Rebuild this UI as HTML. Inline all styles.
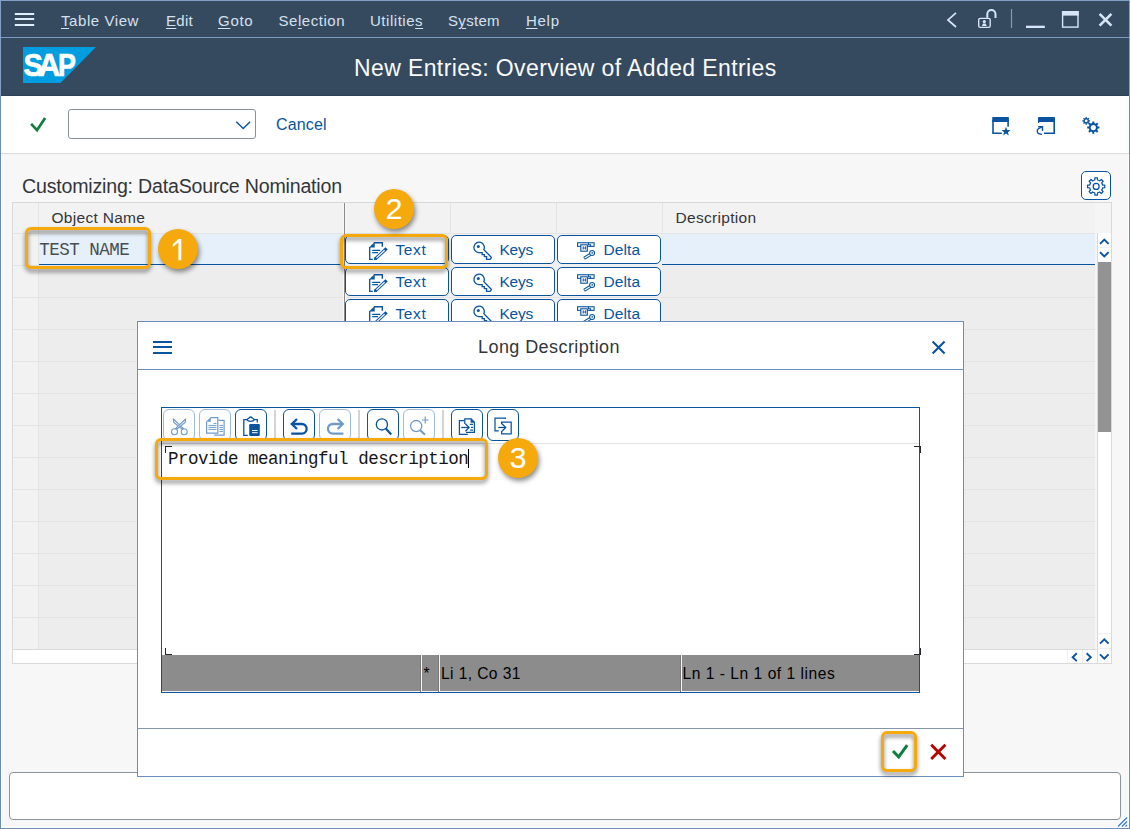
<!DOCTYPE html>
<html>
<head>
<meta charset="utf-8">
<title>New Entries: Overview of Added Entries</title>
<style>
*{box-sizing:border-box;margin:0;padding:0}
html,body{width:1130px;height:829px;overflow:hidden}
body{position:relative;background:#f7f7f7;font-family:"Liberation Sans",sans-serif;color:#32363a}
.a{position:absolute}
.t{position:absolute;white-space:pre;line-height:1;font-family:"Liberation Sans",sans-serif}
.m{position:absolute;white-space:pre;line-height:1;font-family:"Liberation Mono",monospace}
u{text-decoration:underline;text-underline-offset:2px;text-decoration-thickness:1px}
/* header */
#hdr{left:0;top:0;width:1130px;height:96px;background:#354a5f}
#hline{left:1px;top:37px;width:1128px;height:1px;background:#7b9bc0}
.mi{font-size:15px;color:#d5e1ee;top:12.8px}
#title{font-size:23px;color:#fafafa;left:354px;top:57px;letter-spacing:.39px}
/* toolbar */
#tb{left:0;top:96px;width:1130px;height:58px;background:#fff;border-bottom:1px solid #d9d9d9}
#combo{left:68px;top:109px;width:188px;height:30px;border:1px solid #89919a;border-radius:3px;background:#fff}
/* table */
#tbl{left:12px;top:202px;width:1100px;height:462px;border:1px solid #d9d9d9;background:#f5f5f5}
.hc{position:absolute;top:203px;height:30px;background:#f2f2f2}
.vl{position:absolute;width:1px;background:#e4e4e4}
.hl{position:absolute;height:1px;background:#e4e4e4}
.btn{position:absolute;height:29px;border:1px solid #0854a0;border-radius:5px;background:#fff}
.bl{font-size:15.5px;color:#0854a0}
/* callouts */
.ob{position:absolute;border:3px solid #f5a90c;border-radius:6px;filter:drop-shadow(0 3px 2.2px rgba(0,0,0,.5))}
.oc{position:absolute;width:40px;height:40px;border-radius:50%;background:#f5a90c;box-shadow:1.5px 3px 5px rgba(0,0,0,.45);color:#fff;font-size:30px;line-height:39px;-webkit-text-stroke:.15px #fff;text-align:center;font-family:"Liberation Sans",sans-serif}
/* modal */
#modal{left:137px;top:321px;width:827px;height:456px;background:#fff;border:1px solid #6b8fba}
.eb{position:absolute;top:409px;width:32px;height:32px;border:1px solid #0854a0;border-radius:6px;background:#fff}
.eb.d{border-color:#9dbbda}
.sep{position:absolute;top:410px;width:2px;height:30px;background:#d4d4d4}
</style>
</head>
<body>
<!-- ===== header ===== -->
<div class="a" id="hdr"></div>
<div class="a" id="hline"></div>
<div class="a" style="left:1px;top:95px;width:1128px;height:1px;background:#2c4058"></div>
<div class="t mi" style="left:61px;letter-spacing:.57px"><u>T</u>able View</div>
<div class="t mi" style="left:166px;letter-spacing:.31px"><u>E</u>dit</div>
<div class="t mi" style="left:218px;letter-spacing:.72px"><u>G</u>oto</div>
<div class="t mi" style="left:278.5px;letter-spacing:.53px">Se<u>l</u>ection</div>
<div class="t mi" style="left:370px;letter-spacing:.53px">Utilitie<u>s</u></div>
<div class="t mi" style="left:448px;letter-spacing:.3px">S<u>y</u>stem</div>
<div class="t mi" style="left:526px;letter-spacing:.71px"><u>H</u>elp</div>
<div class="t" id="title">New Entries: Overview of Added Entries</div>

<!-- ===== toolbar ===== -->
<div class="a" id="tb"></div>
<div class="a" id="combo"></div>
<div class="t" style="left:276px;top:116.8px;font-size:16px;color:#0854a0;letter-spacing:.14px">Cancel</div>

<!-- ===== heading ===== -->
<div class="t" style="left:22px;top:177px;font-size:19.6px;letter-spacing:-.2px">Customizing: DataSource Nomination</div>

<!-- ===== table ===== -->
<div class="a" id="tbl"></div>
<div id="tblc">
<!-- header cells -->
<div class="hc" style="left:13px;width:1082px"></div>
<!-- data rows bg -->
<div class="a" style="left:13px;top:234px;width:25px;height:416px;background:#f2f2f2"></div>
<div class="a" style="left:39px;top:234px;width:1056px;height:416px;background:#ededed"></div>
<!-- selected row -->
<div class="a" style="left:39px;top:234px;width:1056px;height:31px;background:#e5f0fa;border-bottom:1px solid #0854a0"></div>
<div class="a" style="left:345px;top:234px;width:317px;height:96px;background:#f0f0f0"></div>
<!-- row lines -->
<div class="hl" style="left:13px;top:233px;width:1082px"></div>
<div class="hl" style="left:13px;top:265px;width:26px"></div>
<div class="hl" style="left:13px;top:297px;width:1082px"></div>
<div class="hl" style="left:13px;top:329px;width:1082px"></div>
<div class="hl" style="left:13px;top:361px;width:1082px"></div>
<div class="hl" style="left:13px;top:393px;width:1082px"></div>
<div class="hl" style="left:13px;top:425px;width:1082px"></div>
<div class="hl" style="left:13px;top:457px;width:1082px"></div>
<div class="hl" style="left:13px;top:489px;width:1082px"></div>
<div class="hl" style="left:13px;top:521px;width:1082px"></div>
<div class="hl" style="left:13px;top:553px;width:1082px"></div>
<div class="hl" style="left:13px;top:585px;width:1082px"></div>
<div class="hl" style="left:13px;top:617px;width:1082px"></div>
<div class="hl" style="left:13px;top:649px;width:1084px;background:#d9d9d9"></div>
<!-- col lines -->
<div class="vl" style="left:38px;top:203px;height:446px"></div>
<div class="vl" style="left:343px;top:203px;height:446px;width:3px;background:#f8f8f8"></div>
<div class="vl" style="left:344px;top:203px;height:446px;background:#8a8a8a"></div>
<div class="vl" style="left:450px;top:203px;height:30px"></div>
<div class="vl" style="left:556px;top:203px;height:30px"></div>
<div class="vl" style="left:662px;top:203px;height:30px"></div>
<!-- header text -->
<div class="t" style="left:51.5px;top:210px;font-size:15.5px;letter-spacing:.3px">Object Name</div>
<div class="t" style="left:675.5px;top:210px;font-size:15.5px;letter-spacing:.3px">Description</div>
<!-- row 1 value -->
<div class="m" style="left:39.3px;top:242px;font-size:17.5px;letter-spacing:-.5px;color:#484d53">TEST NAME</div>
<!-- buttons -->
<div class="btn" style="left:345px;top:235px;width:104px"></div>
<div class="btn" style="left:451px;top:235px;width:104px"></div>
<div class="btn" style="left:557px;top:235px;width:104px"></div>
<div class="btn" style="left:345px;top:267px;width:104px"></div>
<div class="btn" style="left:451px;top:267px;width:104px"></div>
<div class="btn" style="left:557px;top:267px;width:104px"></div>
<div class="btn" style="left:345px;top:299px;width:104px"></div>
<div class="btn" style="left:451px;top:299px;width:104px"></div>
<div class="btn" style="left:557px;top:299px;width:104px"></div>
<div class="t bl" style="left:395.5px;top:242px;letter-spacing:.6px">Text</div>
<div class="t bl" style="left:499.5px;top:242px;letter-spacing:-.25px">Keys</div>
<div class="t bl" style="left:603.5px;top:242px;letter-spacing:.1px">Delta</div>
<div class="t bl" style="left:395.5px;top:274px;letter-spacing:.6px">Text</div>
<div class="t bl" style="left:499.5px;top:274px;letter-spacing:-.25px">Keys</div>
<div class="t bl" style="left:603.5px;top:274px;letter-spacing:.1px">Delta</div>
<div class="t bl" style="left:395.5px;top:306px;letter-spacing:.6px">Text</div>
<div class="t bl" style="left:499.5px;top:306px;letter-spacing:-.25px">Keys</div>
<div class="t bl" style="left:603.5px;top:306px;letter-spacing:.1px">Delta</div>
<!-- v scrollbar -->
<div class="a" style="left:1097px;top:233px;width:15px;height:430px;background:#fff;border-left:1px solid #d9d9d9;border-right:1px solid #d9d9d9"></div>
<div class="a" style="left:1098px;top:262px;width:13px;height:170px;background:#939393"></div>
<div class="hl" style="left:1098px;top:247px;width:13px;background:#efefef"></div>
<div class="hl" style="left:1098px;top:633px;width:13px;background:#efefef"></div>
<div class="hl" style="left:1098px;top:648px;width:13px;background:#efefef"></div>
<!-- h scrollbar -->
<div class="a" style="left:13px;top:650px;width:1084px;height:13px;background:#fff"></div>
<div class="vl" style="left:1067px;top:650px;height:13px;background:#efefef"></div>
<div class="vl" style="left:1082px;top:650px;height:13px;background:#efefef"></div>
<!-- settings button -->
<div class="a" style="left:1081px;top:171px;width:30px;height:29px;border:1px solid #0854a0;border-radius:5px;background:#fff"></div>
<!-- callouts 1,2 -->
<div class="ob" style="left:25px;top:227px;width:126px;height:41.7px"></div>
<div class="oc" style="left:158px;top:229px"><svg class="a" style="left:0;top:0" width="40" height="40" viewBox="0 0 40 40"><path d="M20.5,9.9H23.3V31.2H20.4V13.6L14.8,17.9V15.2Z" fill="#fff"/></svg></div>
<div class="ob" style="left:340px;top:234px;width:108.2px;height:34.7px"></div>
<div class="oc" style="left:374px;top:189px">2</div>
</div>

<!--SVGMAIN-->
<svg class="a" style="left:0;top:0" width="1130" height="829" viewBox="0 0 1130 829" fill="none" stroke-linecap="butt">
<path d="M14.8,14H34.2M14.8,19H34.2M14.8,25.1H34.2" stroke="#def0ff" stroke-width="2"/>
<path d="M23,47H96L60.5,83H23Z" fill="#009de0"/>
<g font-family="Liberation Sans, sans-serif" font-weight="700" font-size="32" fill="#fff" stroke="#fff" stroke-width=".7"><text transform="translate(23.46,75.6) scale(.908,1)">S</text><text transform="translate(37.94,75.6) scale(.963,1)">A</text><text transform="translate(57.88,75.6) scale(.838,1)">P</text></g>
<path d="M956,12.8L948,19.9L956,27" stroke="#d6e6f8" stroke-width="1.7"/>
<rect x="978.7" y="18.4" width="11.5" height="9" rx="1.6" stroke="#d6e6f8" stroke-width="1.4"/>
<path d="M987.3,17.8V14.2A4.1,4.1 0 0 1 995.5,14.2V18" stroke="#d6e6f8" stroke-width="2"/>
<circle cx="984.3" cy="21.6" r="1.6" fill="#d6e6f8"/><path d="M981.8,26L983,23.6H985.6L986.8,26Z" fill="#d6e6f8"/>
<path d="M1011.5,9V28" stroke="#8d99a8" stroke-width="1.2"/>
<rect x="1026" y="25.7" width="18.8" height="2.3" fill="#d6e6f8"/>
<rect x="1062.6" y="11.7" width="15.4" height="15.4" stroke="#d6e6f8" stroke-width="1.4"/><rect x="1062" y="11" width="16.7" height="4.6" fill="#d6e6f8"/>
<path d="M1099.6,13.9L1111.4,25.7M1111.4,13.9L1099.6,25.7" stroke="#d6e6f8" stroke-width="2.6"/>
<path d="M31.1,123.9L37,130.2L45.1,117.9" stroke="#107e3e" stroke-width="2.7" stroke-linejoin="miter"/>
<path d="M236.3,121.8L243.2,128.6L250.1,121.8" stroke="#0854a0" stroke-width="1.4"/>
<path d="M993,120V133.3H1001.8" stroke="#0854a0" stroke-width="1.6"/><path d="M1008.1,120V126.8" stroke="#0854a0" stroke-width="1.6"/><rect x="992.2" y="116.9" width="16.7" height="5.1" rx=".8" fill="#0854a0"/>
<path d="M1006.00,126.80L1007.18,129.98L1010.57,130.12L1007.90,132.22L1008.82,135.48L1006.00,133.60L1003.18,135.48L1004.10,132.22L1001.43,130.12L1004.82,129.98Z" fill="#0854a0"/>
<path d="M1054.2,120V133.3H1044" stroke="#0854a0" stroke-width="1.6"/><path d="M1038.6,120V122.9" stroke="#0854a0" stroke-width="1.2"/><rect x="1038" y="116.9" width="17" height="5.1" rx=".8" fill="#0854a0"/>
<path d="M1041.8,134.2C1036,134.4 1035.6,128.6 1041.6,127.4" stroke="#0854a0" stroke-width="1.4"/><path d="M1038.2,126.7H1042.5V131" stroke="#0854a0" stroke-width="1.4"/>
<path d="M1092.30,123.11L1092.31,121.48L1094.29,121.48L1094.30,123.11A4.60,4.60 0 0 1 1095.76,123.72L1096.93,122.57L1098.33,123.97L1097.18,125.14A4.60,4.60 0 0 1 1097.79,126.60L1099.42,126.61L1099.42,128.59L1097.79,128.60A4.60,4.60 0 0 1 1097.18,130.06L1098.33,131.23L1096.93,132.63L1095.76,131.48A4.60,4.60 0 0 1 1094.30,132.09L1094.29,133.72L1092.31,133.72L1092.30,132.09A4.60,4.60 0 0 1 1090.84,131.48L1089.67,132.63L1088.27,131.23L1089.42,130.06A4.60,4.60 0 0 1 1088.81,128.60L1087.18,128.59L1087.18,126.61L1088.81,126.60A4.60,4.60 0 0 1 1089.42,125.14L1088.27,123.97L1089.67,122.57L1090.84,123.72A4.60,4.60 0 0 1 1092.30,123.11Z" fill="#0854a0"/><circle cx="1093.3" cy="127.6" r="2.6" fill="#fff"/>
<path d="M1085.53,118.08L1085.58,116.95L1086.82,116.95L1086.87,118.08A2.80,2.80 0 0 1 1087.65,118.41L1088.48,117.64L1089.36,118.52L1088.59,119.35A2.80,2.80 0 0 1 1088.92,120.13L1090.05,120.18L1090.05,121.42L1088.92,121.47A2.80,2.80 0 0 1 1088.59,122.25L1089.36,123.08L1088.48,123.96L1087.65,123.19A2.80,2.80 0 0 1 1086.87,123.52L1086.82,124.65L1085.58,124.65L1085.53,123.52A2.80,2.80 0 0 1 1084.75,123.19L1083.92,123.96L1083.04,123.08L1083.81,122.25A2.80,2.80 0 0 1 1083.48,121.47L1082.35,121.42L1082.35,120.18L1083.48,120.13A2.80,2.80 0 0 1 1083.81,119.35L1083.04,118.52L1083.92,117.64L1084.75,118.41A2.80,2.80 0 0 1 1085.53,118.08Z" fill="#0854a0"/><circle cx="1086.2" cy="120.8" r="1.4" fill="#fff"/>
<path d="M1094.77,179.99L1094.85,177.85L1097.45,177.85L1097.53,179.99A6.60,6.60 0 0 1 1099.74,180.91L1101.31,179.45L1103.15,181.29L1101.69,182.86A6.60,6.60 0 0 1 1102.61,185.07L1104.75,185.15L1104.75,187.75L1102.61,187.83A6.60,6.60 0 0 1 1101.69,190.04L1103.15,191.61L1101.31,193.45L1099.74,191.99A6.60,6.60 0 0 1 1097.53,192.91L1097.45,195.05L1094.85,195.05L1094.77,192.91A6.60,6.60 0 0 1 1092.56,191.99L1090.99,193.45L1089.15,191.61L1090.61,190.04A6.60,6.60 0 0 1 1089.69,187.83L1087.55,187.75L1087.55,185.15L1089.69,185.07A6.60,6.60 0 0 1 1090.61,182.86L1089.15,181.29L1090.99,179.45L1092.56,180.91A6.60,6.60 0 0 1 1094.77,179.99Z" stroke="#0854a0" stroke-width="1.25" stroke-linejoin="round"/><circle cx="1096.15" cy="186.45" r="3" stroke="#0854a0" stroke-width="1.25"/>
<g transform="translate(368,241)" stroke="#0854a0" stroke-width="1.35" fill="none">
<path d="M5.8,1.7H14.3V5.8"/><path d="M1.7,6V18.3H4.8"/>
<path d="M1,6.6L6.7,1V6.6Z" fill="#0854a0" stroke="none"/>
<path d="M4.2,9.4H12.2M4.2,11.6H10" stroke-width="1.1"/>
<path d="M7,18.2L18.6,7.4" stroke-width="3.2"/>
<path d="M8.4,16.9L16.6,9.3" stroke="#fff" stroke-width="1.2"/>
<path d="M5.8,19.3L8.6,18.6L6.6,16.5Z" fill="#0854a0" stroke="none"/>
</g>
<g transform="translate(472,241)" stroke="#0854a0" stroke-width="1.3" fill="none" stroke-linejoin="miter">
<path d="M11.8,8.7A5.2,5.2 0 1 0 6.8,11.6H10.2V13.6H12.4V15.6H14.6V18.4H18L19.3,17V16.2Z"/>
<circle cx="6.3" cy="5.4" r="1.5" fill="#0854a0" stroke="none"/>
</g>
<g transform="translate(576,241)" stroke="#0854a0" stroke-width="1.1" fill="none">
<rect x="1.6" y="1.75" width="16.5" height="3.6"/>
<path d="M12.5,1.8V3.8H14.6V5.3"/>
<rect x="4.8" y="3.8" width="6.5" height="6.4" fill="#fff"/>
<path d="M7.2,5.4V8.6M9.6,5.4V8.6M7.2,7H9.6" stroke-width=".95"/>
<path d="M5.6,5.5L6.8,7L5.6,8.5Z" fill="#8fb1d6" stroke="none"/>
<path d="M8.1,17.3L14.4,13.4" stroke-width="3.3"/>
<path d="M8.7,16.95L14.4,13.4" stroke="#fff" stroke-width="1.15"/>
<circle cx="16.1" cy="12" r="2.45" fill="#fff"/>
<circle cx="16.2" cy="11.8" r=".85" fill="#0854a0" stroke="none"/>
</g>
<g transform="translate(368,273)" stroke="#0854a0" stroke-width="1.35" fill="none">
<path d="M5.8,1.7H14.3V5.8"/><path d="M1.7,6V18.3H4.8"/>
<path d="M1,6.6L6.7,1V6.6Z" fill="#0854a0" stroke="none"/>
<path d="M4.2,9.4H12.2M4.2,11.6H10" stroke-width="1.1"/>
<path d="M7,18.2L18.6,7.4" stroke-width="3.2"/>
<path d="M8.4,16.9L16.6,9.3" stroke="#fff" stroke-width="1.2"/>
<path d="M5.8,19.3L8.6,18.6L6.6,16.5Z" fill="#0854a0" stroke="none"/>
</g>
<g transform="translate(472,273)" stroke="#0854a0" stroke-width="1.3" fill="none" stroke-linejoin="miter">
<path d="M11.8,8.7A5.2,5.2 0 1 0 6.8,11.6H10.2V13.6H12.4V15.6H14.6V18.4H18L19.3,17V16.2Z"/>
<circle cx="6.3" cy="5.4" r="1.5" fill="#0854a0" stroke="none"/>
</g>
<g transform="translate(576,273)" stroke="#0854a0" stroke-width="1.1" fill="none">
<rect x="1.6" y="1.75" width="16.5" height="3.6"/>
<path d="M12.5,1.8V3.8H14.6V5.3"/>
<rect x="4.8" y="3.8" width="6.5" height="6.4" fill="#fff"/>
<path d="M7.2,5.4V8.6M9.6,5.4V8.6M7.2,7H9.6" stroke-width=".95"/>
<path d="M5.6,5.5L6.8,7L5.6,8.5Z" fill="#8fb1d6" stroke="none"/>
<path d="M8.1,17.3L14.4,13.4" stroke-width="3.3"/>
<path d="M8.7,16.95L14.4,13.4" stroke="#fff" stroke-width="1.15"/>
<circle cx="16.1" cy="12" r="2.45" fill="#fff"/>
<circle cx="16.2" cy="11.8" r=".85" fill="#0854a0" stroke="none"/>
</g>
<g transform="translate(368,305)" stroke="#0854a0" stroke-width="1.35" fill="none">
<path d="M5.8,1.7H14.3V5.8"/><path d="M1.7,6V18.3H4.8"/>
<path d="M1,6.6L6.7,1V6.6Z" fill="#0854a0" stroke="none"/>
<path d="M4.2,9.4H12.2M4.2,11.6H10" stroke-width="1.1"/>
<path d="M7,18.2L18.6,7.4" stroke-width="3.2"/>
<path d="M8.4,16.9L16.6,9.3" stroke="#fff" stroke-width="1.2"/>
<path d="M5.8,19.3L8.6,18.6L6.6,16.5Z" fill="#0854a0" stroke="none"/>
</g>
<g transform="translate(472,305)" stroke="#0854a0" stroke-width="1.3" fill="none" stroke-linejoin="miter">
<path d="M11.8,8.7A5.2,5.2 0 1 0 6.8,11.6H10.2V13.6H12.4V15.6H14.6V18.4H18L19.3,17V16.2Z"/>
<circle cx="6.3" cy="5.4" r="1.5" fill="#0854a0" stroke="none"/>
</g>
<g transform="translate(576,305)" stroke="#0854a0" stroke-width="1.1" fill="none">
<rect x="1.6" y="1.75" width="16.5" height="3.6"/>
<path d="M12.5,1.8V3.8H14.6V5.3"/>
<rect x="4.8" y="3.8" width="6.5" height="6.4" fill="#fff"/>
<path d="M7.2,5.4V8.6M9.6,5.4V8.6M7.2,7H9.6" stroke-width=".95"/>
<path d="M5.6,5.5L6.8,7L5.6,8.5Z" fill="#8fb1d6" stroke="none"/>
<path d="M8.1,17.3L14.4,13.4" stroke-width="3.3"/>
<path d="M8.7,16.95L14.4,13.4" stroke="#fff" stroke-width="1.15"/>
<circle cx="16.1" cy="12" r="2.45" fill="#fff"/>
<circle cx="16.2" cy="11.8" r=".85" fill="#0854a0" stroke="none"/>
</g>
<path transform="translate(1104.3,241.5)" d="M-4.3,2.3L0,-2L4.3,2.3" stroke="#0854a0" stroke-width="1.9" fill="none"/>
<path transform="translate(1104.3,254.5)" d="M-4.3,-2.3L0,2L4.3,-2.3" stroke="#0854a0" stroke-width="1.9" fill="none"/>
<path transform="translate(1104.3,641.3)" d="M-4.3,2.3L0,-2L4.3,2.3" stroke="#0854a0" stroke-width="1.9" fill="none"/>
<path transform="translate(1104.3,656.6)" d="M-4.3,-2.3L0,2L4.3,-2.3" stroke="#0854a0" stroke-width="1.9" fill="none"/>
<path d="M1076.8,653.3L1072.6,657.2L1076.8,661.1" stroke="#0854a0" stroke-width="1.9"/><path d="M1086.6,653.3L1090.8,657.2L1086.6,661.1" stroke="#0854a0" stroke-width="1.9"/>
<path d="M1118,826.5L1127,817.5M1122,826.5L1127,821.5M1125.5,826.5L1127,825" stroke="#2b7bd0" stroke-width="1.1"/>
</svg>
<!--/SVGMAIN-->
<!-- ===== status/message bar ===== -->
<div class="a" style="left:9px;top:772px;width:1112px;height:48px;border:1px solid #89929f;border-radius:4px;background:#fff"></div>

<!-- ===== modal ===== -->
<div class="a" id="modal"></div>
<div id="modc">
<!-- modal header -->
<div class="a" style="left:138px;top:369px;width:825px;height:1px;background:#6b8fba"></div>
<div class="a" style="left:153px;top:341px;width:19px;height:2px;background:#0854a0"></div>
<div class="a" style="left:153px;top:346px;width:19px;height:2px;background:#0854a0"></div>
<div class="a" style="left:153px;top:352px;width:19px;height:2px;background:#0854a0"></div>
<div class="t" style="left:478px;top:337.5px;font-size:18px;letter-spacing:.43px">Long Description</div>
<!-- footer line -->
<div class="a" style="left:138px;top:728px;width:825px;height:1px;background:#8696a8"></div>
<!-- editor frame -->
<div class="a" style="left:161px;top:407px;width:759px;height:286px;border:1px solid #0854a0;background:#fff"></div>
<div class="a" style="left:162px;top:443px;width:757px;height:1px;background:#e2e2e2"></div>
<!-- editor toolbar buttons -->
<div class="eb d" style="left:163px"></div>
<div class="eb d" style="left:199px"></div>
<div class="eb" style="left:235px"></div>
<div class="sep" style="left:274px"></div>
<div class="eb" style="left:283px"></div>
<div class="eb d" style="left:319px"></div>
<div class="sep" style="left:358px"></div>
<div class="eb" style="left:367px"></div>
<div class="eb d" style="left:403px"></div>
<div class="sep" style="left:442px"></div>
<div class="eb" style="left:451px"></div>
<div class="eb" style="left:487px"></div>
<!--SVGMODAL-->
<svg class="a" style="left:0;top:0" width="1130" height="829" viewBox="0 0 1130 829" fill="none">
<path d="M932.6,341.4L944.6,353.4M944.6,341.4L932.6,353.4" stroke="#0854a0" stroke-width="2.1"/>
<g opacity=".58" stroke="#0854a0" stroke-width="1.1" stroke-linejoin="round">
<circle cx="174.5" cy="431.7" r="3"/><circle cx="184.2" cy="431.7" r="3"/>
<path d="M173.4,419L173.7,422.3L182.3,429.2L183.6,428.6Z"/>
<path d="M185.6,419L185.3,422.3L176.7,429.2L175.4,428.6Z" fill="#fff"/>
</g>
<g opacity=".58" stroke="#0854a0" stroke-width="1.2">
<path d="M210.5,417.7H217.8V433.2H206.6V421.6"/>
<path d="M206,421.8L210.8,417.1V421.8Z" fill="#0854a0" stroke="none"/>
<path d="M213.5,423.4H216.5M208.4,425.4H216.5M208.4,427.4H216.5M208.4,429.4H216.5" stroke-width="1"/>
<path d="M218.4,420.4H224.1V435.1H214.2"/>
<path d="M219.4,425.4H223M219.4,427.4H223M219.4,429.4H223M219.4,431.4H223" stroke-width="1"/>
</g>
<g stroke="#0854a0" stroke-width="1.3">
<path d="M247.2,419.7H243.8V435.3H247.8"/>
<path d="M254,419.7H257.3V422.6"/>
<path d="M246.9,419.6C247.6,418.6 248.3,418.4 249,418.2C249.4,416.6 251.9,416.6 252.3,418.2C253,418.4 253.7,418.6 254.4,419.6C253.6,421.2 252.8,421.3 250.6,421.3C248.4,421.3 247.7,421.2 246.9,419.6Z"/>
<rect x="249.2" y="424" width="10.6" height="11.9" rx="1.2" fill="#0854a0" stroke="none"/>
<path d="M252,430.5H257.6M252,432.7H257.6" stroke="#fff" stroke-width="1"/>
</g>
<g stroke="#0854a0" stroke-width="2.3">
<path d="M297,419L291.8,424L297,429" stroke-linejoin="miter"/>
<path d="M292.5,424H301.8A4.8,4.8 0 0 1 301.8,433.7H291.2"/>
</g>
<g stroke="#0854a0" stroke-width="2.3" opacity=".58">
<path d="M337.6,419L342.8,424L337.6,429" stroke-linejoin="miter"/>
<path d="M342.1,424H332.8A4.8,4.8 0 0 0 332.8,433.7H343.4"/>
</g>
<g stroke="#0854a0">
<circle cx="381.9" cy="424.4" r="5.6" stroke-width="1.3"/>
<path d="M385.8,428.6L391.2,434.4" stroke-width="2.2"/>
</g>
<g stroke="#0854a0" opacity=".58">
<circle cx="416.2" cy="426.1" r="5.6" stroke-width="1.3"/>
<path d="M420.2,430.2L425,434.8" stroke-width="2"/>
<path d="M425.2,416.6V423.4M421.9,420H428.5" stroke-width="1.2"/>
</g>
<g stroke="#0854a0" stroke-width="1.25">
<path d="M464.2,420.6H459.4V434.3H467.8"/>
<path d="M464.8,424V418.8H471.2M474.4,422V432.3H466"/>
<path d="M470.6,418.2H471.4L475,422V422.8H470.6Z" fill="#0854a0" stroke="none"/>
<path d="M461.2,427.5H469"/>
<path d="M465.4,423.8L469.1,427.5L465.4,431.2"/>
<path d="M469.8,424.4H473M471,427.4H473M470.2,430.1H473" stroke-width="1.1"/>
</g>
<g stroke="#0854a0" stroke-width="1.25">
<path d="M505.4,419V418H495V430.8H498.8"/>
<path d="M501.6,424.2V422H511.2V433.8H501.6V431"/>
<path d="M498.2,427.5H505.6"/>
<path d="M502,423.8L505.7,427.5L502,431.2"/>
</g>
<path d="M893,751L898.7,757L907.2,745.2" stroke="#107e3e" stroke-width="3"/>
<path d="M931.2,744.8L945.4,759M945.4,744.8L931.2,759" stroke="#bb0000" stroke-width="2.9"/>
</svg>
<!--/SVGMODAL-->

<div class="a" style="left:162px;top:444px;width:757px;height:211px;background:#fff"></div>
<div class="m" style="left:168.1px;top:451px;font-size:17.5px;letter-spacing:-.5px;color:#161616">Provide meaningful description</div>
<div class="a" style="left:468px;top:449px;width:1px;height:19px;background:#000"></div>
<!-- corner marks -->
<div class="a" style="left:165px;top:446px;width:7px;height:7px;border-left:1px solid #25282d;border-top:1px solid #25282d"></div>
<div class="a" style="left:914px;top:446px;width:7px;height:7px;border-right:1px solid #25282d;border-top:1px solid #25282d"></div>
<div class="a" style="left:165px;top:648px;width:7px;height:7px;border-left:1px solid #25282d;border-bottom:1px solid #25282d"></div>
<div class="a" style="left:914px;top:648px;width:7px;height:7px;border-right:1px solid #25282d;border-bottom:1px solid #25282d"></div>
<!-- editor status bar -->
<div class="a" style="left:162px;top:655px;width:757px;height:37px;background:#8c8c8c"></div>
<div class="a" style="left:162px;top:691px;width:757px;height:1px;background:#f4f4f4"></div>
<div class="a" style="left:420px;top:655px;width:1px;height:37px;background:#7a7a7a"></div>
<div class="a" style="left:421px;top:655px;width:1px;height:37px;background:#f4f4f4"></div>
<div class="a" style="left:438px;top:655px;width:1px;height:37px;background:#7a7a7a"></div>
<div class="a" style="left:439px;top:655px;width:1px;height:37px;background:#f4f4f4"></div>
<div class="a" style="left:680px;top:655px;width:1px;height:37px;background:#7a7a7a"></div>
<div class="a" style="left:681px;top:655px;width:1px;height:37px;background:#f4f4f4"></div>
<div class="t" style="left:423.5px;top:666px;font-size:15.6px;color:#000">*</div>
<div class="t" style="left:441px;top:666px;font-size:15.6px;color:#000;letter-spacing:.4px">Li 1, Co 31</div>
<div class="t" style="left:682.5px;top:666px;font-size:15.6px;color:#000;letter-spacing:.52px">Ln 1 - Ln 1 of 1 lines</div>
<!-- callout 3 + check -->
<div class="ob" style="left:155px;top:438px;width:333px;height:41.5px"></div>
<div class="oc" style="left:498px;top:438px">3</div>
<div class="ob" style="left:881.4px;top:731.4px;width:35.6px;height:40.7px"></div>
</div>

<!-- window frame -->
<div class="a" style="left:1px;top:154px;width:1128px;height:674px;border:1px solid #fff;border-top:0;pointer-events:none"></div>
<div class="a" style="left:0;top:0;width:1130px;height:829px;border:1px solid #6b8db3;pointer-events:none"></div>
<div class="a" style="left:0;top:0;width:1130px;height:96px;border:1px solid #80a0c6;border-bottom:0;pointer-events:none"></div>
</body>
</html>
